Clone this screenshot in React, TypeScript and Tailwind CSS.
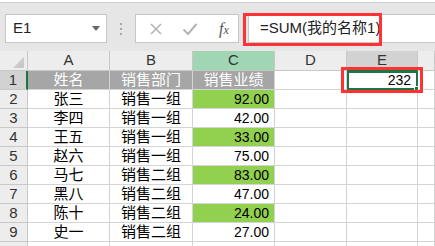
import React from 'react';

const font = { fontFamily: '"Liberation Sans", "Noto Sans CJK SC", sans-serif' };

const rows = [
  { name: '张三', dept: '销售一组', score: '92.00', hi: true },
  { name: '李四', dept: '销售一组', score: '42.00', hi: false },
  { name: '王五', dept: '销售一组', score: '33.00', hi: true },
  { name: '赵六', dept: '销售一组', score: '75.00', hi: false },
  { name: '马七', dept: '销售二组', score: '83.00', hi: true },
  { name: '黑八', dept: '销售二组', score: '47.00', hi: false },
  { name: '陈十', dept: '销售二组', score: '24.00', hi: true },
  { name: '史一', dept: '销售二组', score: '27.00', hi: false },
];

const cell = 'h-[19px] border-r border-b border-[#d4d4d4] flex items-center';
const rowHead =
  'h-[19px] border-r border-b border-[#c8c8c8] bg-[#ededed] flex items-center justify-center text-[15px] text-[#333]';

const App: React.FC = () => {
  return (
    <div className="relative h-[246px] w-[435px] overflow-hidden bg-white" style={font}>
      {/* Formula bar */}
      <div className="mt-[2px] flex h-[49px] items-start border-t border-[#d0d0d0] bg-[#e6e6e6] pt-[11px]">
        <div className="ml-[5px] flex h-[29px] w-[102px] items-center justify-between border border-[#c6c6c6] bg-white pl-[7px] pr-[6px]">
          <span className="text-[15px] text-[#222]">E1</span>
          <span className="h-0 w-0 border-x-[4px] border-t-[5px] border-x-transparent border-t-[#666]" />
        </div>
        <div className="ml-[13px] mr-[13px] flex h-[29px] flex-col items-center justify-center gap-[3px]">
          <span className="h-[2px] w-[2px] bg-[#a8a8a8]" />
          <span className="h-[2px] w-[2px] bg-[#a8a8a8]" />
          <span className="h-[2px] w-[2px] bg-[#a8a8a8]" />
        </div>
        <div className="flex h-[29px] w-[104px] items-center border border-[#c6c6c6] bg-white">
          <svg width="14" height="14" viewBox="0 0 14 14" className="ml-[13px]">
            <path d="M2 2 L12 12 M12 2 L2 12" stroke="#b4b4b4" strokeWidth="1.6" fill="none" />
          </svg>
          <svg width="16" height="14" viewBox="0 0 16 14" className="ml-[19px]">
            <path d="M1.5 7.5 L6 12 L14.5 2" stroke="#b4b4b4" strokeWidth="2" fill="none" />
          </svg>
          <span
            className="ml-[21px] text-[16px] italic text-[#555]"
            style={{ fontFamily: '"Liberation Serif", serif' }}
          >
            f<span className="text-[12px]">x</span>
          </span>
        </div>
        <div className="ml-[9px] flex h-[29px] flex-1 items-center border border-r-0 border-[#c6c6c6] bg-white pl-[11px]">
          <span className="text-[15px] text-[#222]">=SUM(我的名称1)</span>
        </div>
      </div>

      {/* Grid */}
      <div className="grid grid-cols-[28px_82px_83px_82px_72px_71px_1fr]">
        {/* header row */}
        <div className="relative h-[20px] border-r border-b border-[#c8c8c8] bg-[#ededed]">
          <span className="absolute bottom-[2px] right-[3px] h-0 w-0 border-l-[11px] border-t-[11px] border-b-0 border-r-[11px] border-l-transparent border-t-transparent border-r-[#c9c9c9]" />
        </div>
        {['A', 'B', 'C', 'D', 'E', ''].map((c) => (
          <div
            key={c || 'F'}
            className={
              'flex h-[20px] items-center justify-center border-r border-[#c8c8c8] text-[15px] text-[#333] ' +
              (c === 'C'
                ? 'bg-[#a0d6b4] border-b'
                : c === 'E'
                  ? 'bg-[#d2d2d2] border-b-2 border-b-[#217346]'
                  : 'bg-[#ededed] border-b')
            }
          >
            {c}
          </div>
        ))}

        {/* row 1 */}
        <div className={rowHead + ' !bg-[#d2d2d2] border-r-2 border-r-[#217346]'}>1</div>
        <div className={cell + ' justify-center bg-[#a6a6a6] text-[15px] text-white'}>姓名</div>
        <div className={cell + ' justify-center bg-[#a6a6a6] text-[15px] text-white'}>销售部门</div>
        <div className={cell + ' justify-center bg-[#a6a6a6] text-[15px] text-white'}>销售业绩</div>
        <div className={cell} />
        <div className="relative flex h-[19px] items-center justify-end border-2 border-[#217346] pr-[5px] text-[14px] text-black">
          232
          <span className="absolute -bottom-[3px] -right-[3px] h-[5px] w-[5px] border border-white bg-[#217346]" />
        </div>
        <div className={cell} />

        {rows.map((r, i) => (
          <React.Fragment key={r.name}>
            <div className={rowHead}>{i + 2}</div>
            <div className={cell + ' justify-center text-[15px] text-black'}>{r.name}</div>
            <div className={cell + ' justify-center text-[15px] text-black'}>{r.dept}</div>
            <div
              className={
                cell + ' justify-end pr-[5px] text-[14px] text-black ' + (r.hi ? 'bg-[#92d050]' : '')
              }
            >
              {r.score}
            </div>
            <div className={cell} />
            <div className={cell} />
            <div className={cell} />
          </React.Fragment>
        ))}

        {/* row 10 (only its top edge is in view) */}
        <div className={rowHead} />
        <div className={cell} />
        <div className={cell} />
        <div className={cell} />
        <div className={cell} />
        <div className={cell} />
        <div className={cell} />
      </div>

      {/* red highlight boxes */}
      <div className="absolute left-[243px] top-[13px] h-[33px] w-[139px] border-[3px] border-[#ff3333]" />
      <div className="absolute left-[341px] top-[67px] h-[26px] w-[82px] border-[3px] border-[#ff3333]" />
    </div>
  );
};

export default App;
